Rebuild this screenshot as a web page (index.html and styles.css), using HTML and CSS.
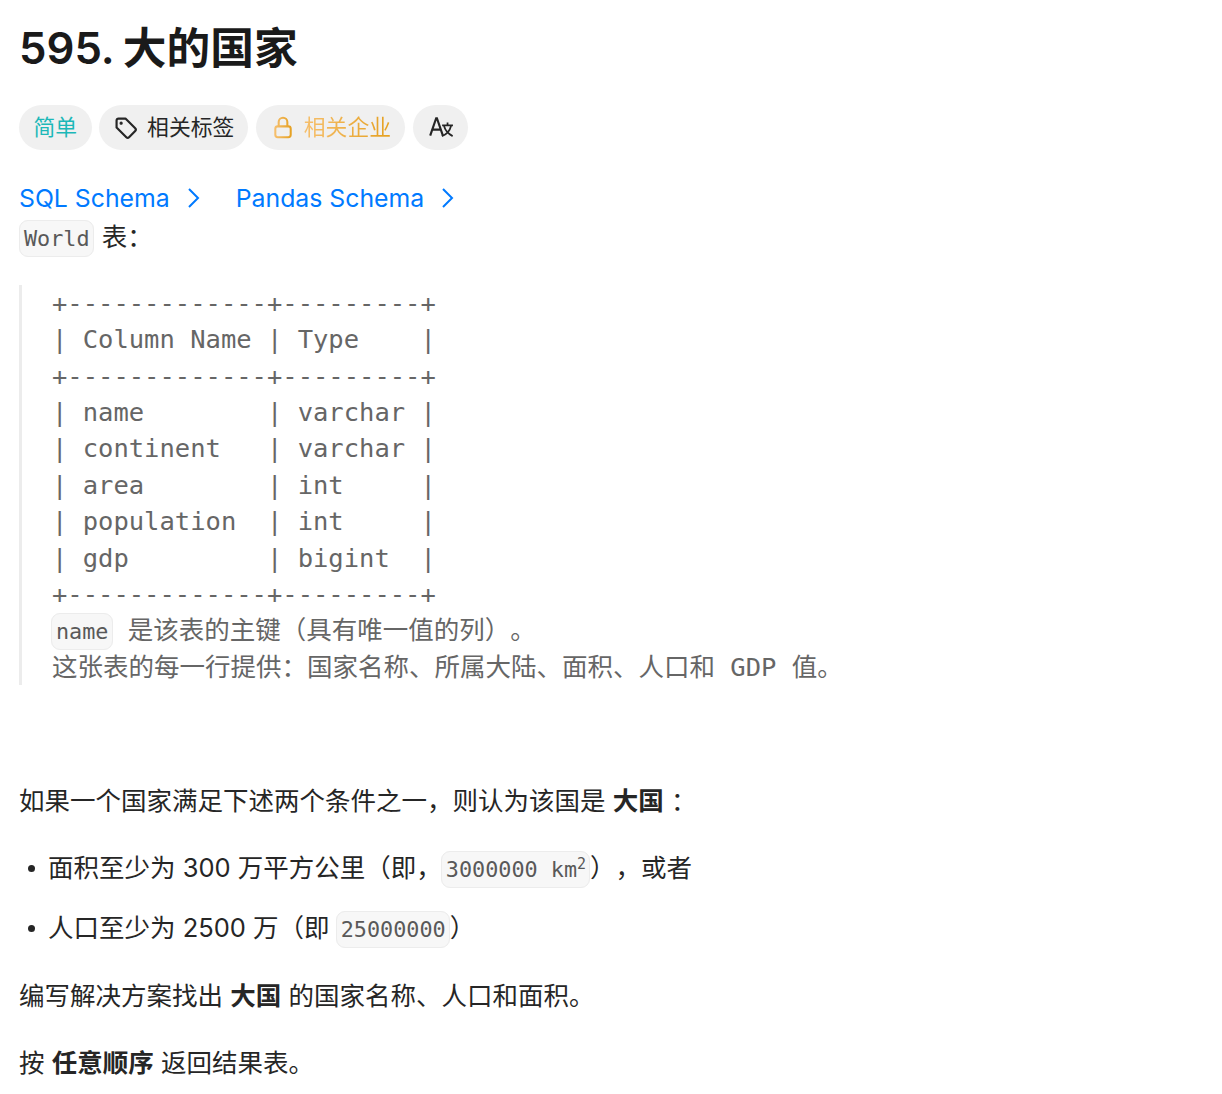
FILE: index.html
```
<!DOCTYPE html>
<html lang="zh-CN">
<head>
<meta charset="utf-8">
<title>595. 大的国家</title>
<link rel="stylesheet" href="styles.css">
</head>
<body>
<h1 class="title">595. 大的国家</h1>
<div class="tags">
  <span class="tag tag-easy">简单</span>
  <span class="tag"><svg class="icon" viewBox="0 0 24 24" fill="none" stroke="currentColor" stroke-width="2" stroke-linejoin="round"><path d="M3.3 5A1.7 1.7 0 0 1 5 3.3h6.5l9 9a1.8 1.8 0 0 1 0 2.5l-5.7 5.7a1.8 1.8 0 0 1-2.5 0l-9-9z"/><circle cx="7.5" cy="7.5" r="1" fill="currentColor" stroke-width="1"/></svg>相关标签</span>
  <span class="tag tag-lock"><svg class="icon" viewBox="0 0 24 24" fill="none" stroke="url(#lock-fade)" stroke-width="1.9"><defs><linearGradient id="lock-fade" gradientUnits="userSpaceOnUse" x1="4" y1="0" x2="20" y2="0"><stop offset="0" stop-color="#f6c070"/><stop offset="1" stop-color="#e5a020"/></linearGradient></defs><rect x="4.9" y="10.5" width="14.2" height="10" rx="2.2"/><path d="M8 10.5V6.5a4 4 0 0 1 8 0v4"/></svg><span class="lock-text">相关企业</span></span>
  <span class="tag tag-icon"><svg class="icon" viewBox="0 0 24 24" fill="none" stroke="currentColor" stroke-width="2"><path d="M2.5 19 8 3h.7l5.5 16M4.5 13.5h8"/><path d="M18.5 7v2.5M13.5 9.5h10M15.2 10c1 4 4 7.5 8 9.5M21.8 10c-1 4-4 8-8.5 9.5" stroke-width="1.6"/></svg></span>
</div>
<div class="schemas">
  <a class="schema" href="#">SQL Schema<svg class="chev" viewBox="0 0 13 20" fill="none" stroke="currentColor" stroke-width="2"><path d="m2 1 9 9-9 9"/></svg></a>
  <a class="schema" href="#">Pandas Schema<svg class="chev" viewBox="0 0 13 20" fill="none" stroke="currentColor" stroke-width="2"><path d="m2 1 9 9-9 9"/></svg></a>
</div>
<p class="intro"><code>World</code> 表：</p>
<pre class="block">+-------------+---------+
| Column Name | Type    |
+-------------+---------+
| name        | varchar |
| continent   | varchar |
| area        | int     |
| population  | int     |
| gdp         | bigint  |
+-------------+---------+
<code>name</code> 是该表的主键（具有唯一值的列）。
这张表的每一行提供：国家名称、所属大陆、面积、人口和 GDP 值。</pre>
<p class="lead">如果一个国家满足下述两个条件之一，则认为该国是 <strong>大国</strong> ：</p>
<ul class="list">
  <li>面积至少为 300 万平方公里（即，<code>3000000 km<sup>2</sup></code>），或者</li>
  <li>人口至少为 2500 万（即 <code>25000000</code>）</li>
</ul>
<p class="para">编写解决方案找出 <strong>大国</strong> 的国家名称、人口和面积。</p>
<p class="para">按 <strong>任意顺序</strong> 返回结果表。</p>
</body>
</html>
```
FILE: styles.css
```
* { box-sizing: border-box; }
html, body { margin: 0; background: #fff; }
body {
  padding: 0 19px;
  color: #262626;
  font: 25.5px/36.4px Inter, "Noto Sans CJK SC", sans-serif;
  text-spacing-trim: space-all;
  overflow: hidden;
}
.title {
  margin: 21px 0 0;
  font-size: 43.7px;
  line-height: 56px;
  font-weight: 600;
  color: #1a1a1a;
  word-spacing: -2px;
}
.tags { display: flex; gap: 7.5px; margin: 28px 0 0; }
.tag {
  display: flex;
  align-items: center;
  gap: 8px;
  height: 45px;
  padding: 0 14px;
  border-radius: 23px;
  background: #f0f0f0;
  font-size: 21.8px;
  white-space: nowrap;
}
.tag-easy { padding: 0 14.5px; color: #1cb8b8; }
.lock-text {
  background: linear-gradient(90deg, #f6bf6c, #e5a020);
  -webkit-background-clip: text;
  background-clip: text;
  color: transparent;
}
.icon { width: 26px; height: 26px; flex: none; }
.tag-icon .icon { width: 27px; }
.schemas { display: flex; gap: 36px; margin-top: 30px; font-size: 24.8px; }
.schema {
  display: flex;
  align-items: center;
  gap: 17px;
  color: #007aff;
  text-decoration: none;
}
.chev { width: 13px; height: 20px; }
p { margin: 0; }
code {
  padding: 5px 3px 5px 4px;
  border: 1px solid #ececec;
  border-radius: 9px;
  background: #f7f7f7;
  color: #595959;
  font: 21.8px "DejaVu Sans Mono", monospace;
  margin-left: -1px;
}
sup { font-size: 15px; line-height: 0; }
.intro { margin-top: 3px; }
.intro code { margin: 0 1px 0 0; }
.block {
  margin: 29px 0 0;
  padding-left: 30px;
  border-left: 3px solid #ececec;
  color: #666;
  font: 25.5px/36.4px "DejaVu Sans Mono", "Noto Sans CJK SC", monospace;
}
.lead { margin-top: 98px; }
.list { margin: 30px 0 0; padding: 0 0 0 29px; list-style: none; }
.list li { position: relative; }
.list li::before {
  content: "";
  position: absolute;
  left: -20px;
  top: 15px;
  width: 7px;
  height: 7px;
  border-radius: 50%;
  background: #262626;
}
.list li + li { margin-top: 24px; }
.para { margin-top: 31px; }
strong { font-weight: 700; }
```
